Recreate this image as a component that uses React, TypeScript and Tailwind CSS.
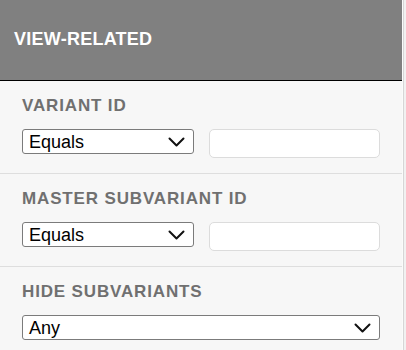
function FakeSelect({ value }: { value: string }) {
  return (
    <div className="flex h-[25px] items-center justify-between rounded-[3px] border border-[#7b7b7b] bg-white pl-[6px] pr-[8px] text-[18px] leading-none text-black">
      <span>{value}</span>
      <svg width="17" height="10" viewBox="0 0 17 10" fill="none" className="shrink-0">
        <path d="M1.5 1.5 L8.5 8.5 L15.5 1.5" stroke="#111" strokeWidth="2" strokeLinecap="round" strokeLinejoin="round" />
      </svg>
    </div>
  );
}

function TextBox() {
  return <div className="h-[29px] rounded-[5px] border border-[#dcdcdc] bg-white" />;
}

function Section({ label, children }: { label: string; children: React.ReactNode }) {
  return (
    <div className="h-[93px] border-b border-[#dedede] px-[22px] pt-[15px]">
      <div className="text-[17px] font-bold leading-[20px] tracking-[0.85px] text-[#707070]">{label}</div>
      <div className="mt-[13px]">{children}</div>
    </div>
  );
}

export default function App() {
  return (
    <div className="flex h-screen w-full overflow-hidden bg-[#f7f7f7] font-['Liberation_Sans',Arial,sans-serif]">
      <div className="w-[402px] shrink-0">
        {/* Header */}
        <div className="flex h-[81px] items-center border-b border-black bg-[#808080] pb-[3px] pl-[14px]">
          <span className="text-[18px] font-bold leading-none tracking-[0.25px] text-white">VIEW-RELATED</span>
        </div>

        <Section label="VARIANT ID">
          <div className="grid grid-cols-2 items-start gap-[15px]">
            <FakeSelect value="Equals" />
            <TextBox />
          </div>
        </Section>

        <Section label="MASTER SUBVARIANT ID">
          <div className="grid grid-cols-2 items-start gap-[15px]">
            <FakeSelect value="Equals" />
            <TextBox />
          </div>
        </Section>

        <Section label="HIDE SUBVARIANTS">
          <FakeSelect value="Any" />
        </Section>
      </div>

      {/* scrollbar track */}
      <div className="flex flex-1">
        <div className="w-px bg-[#fbfbfb]" />
        <div className="w-px bg-[#d6d6d6]" />
        <div className="flex-1 bg-[#f1f1f1]" />
      </div>
    </div>
  );
}
